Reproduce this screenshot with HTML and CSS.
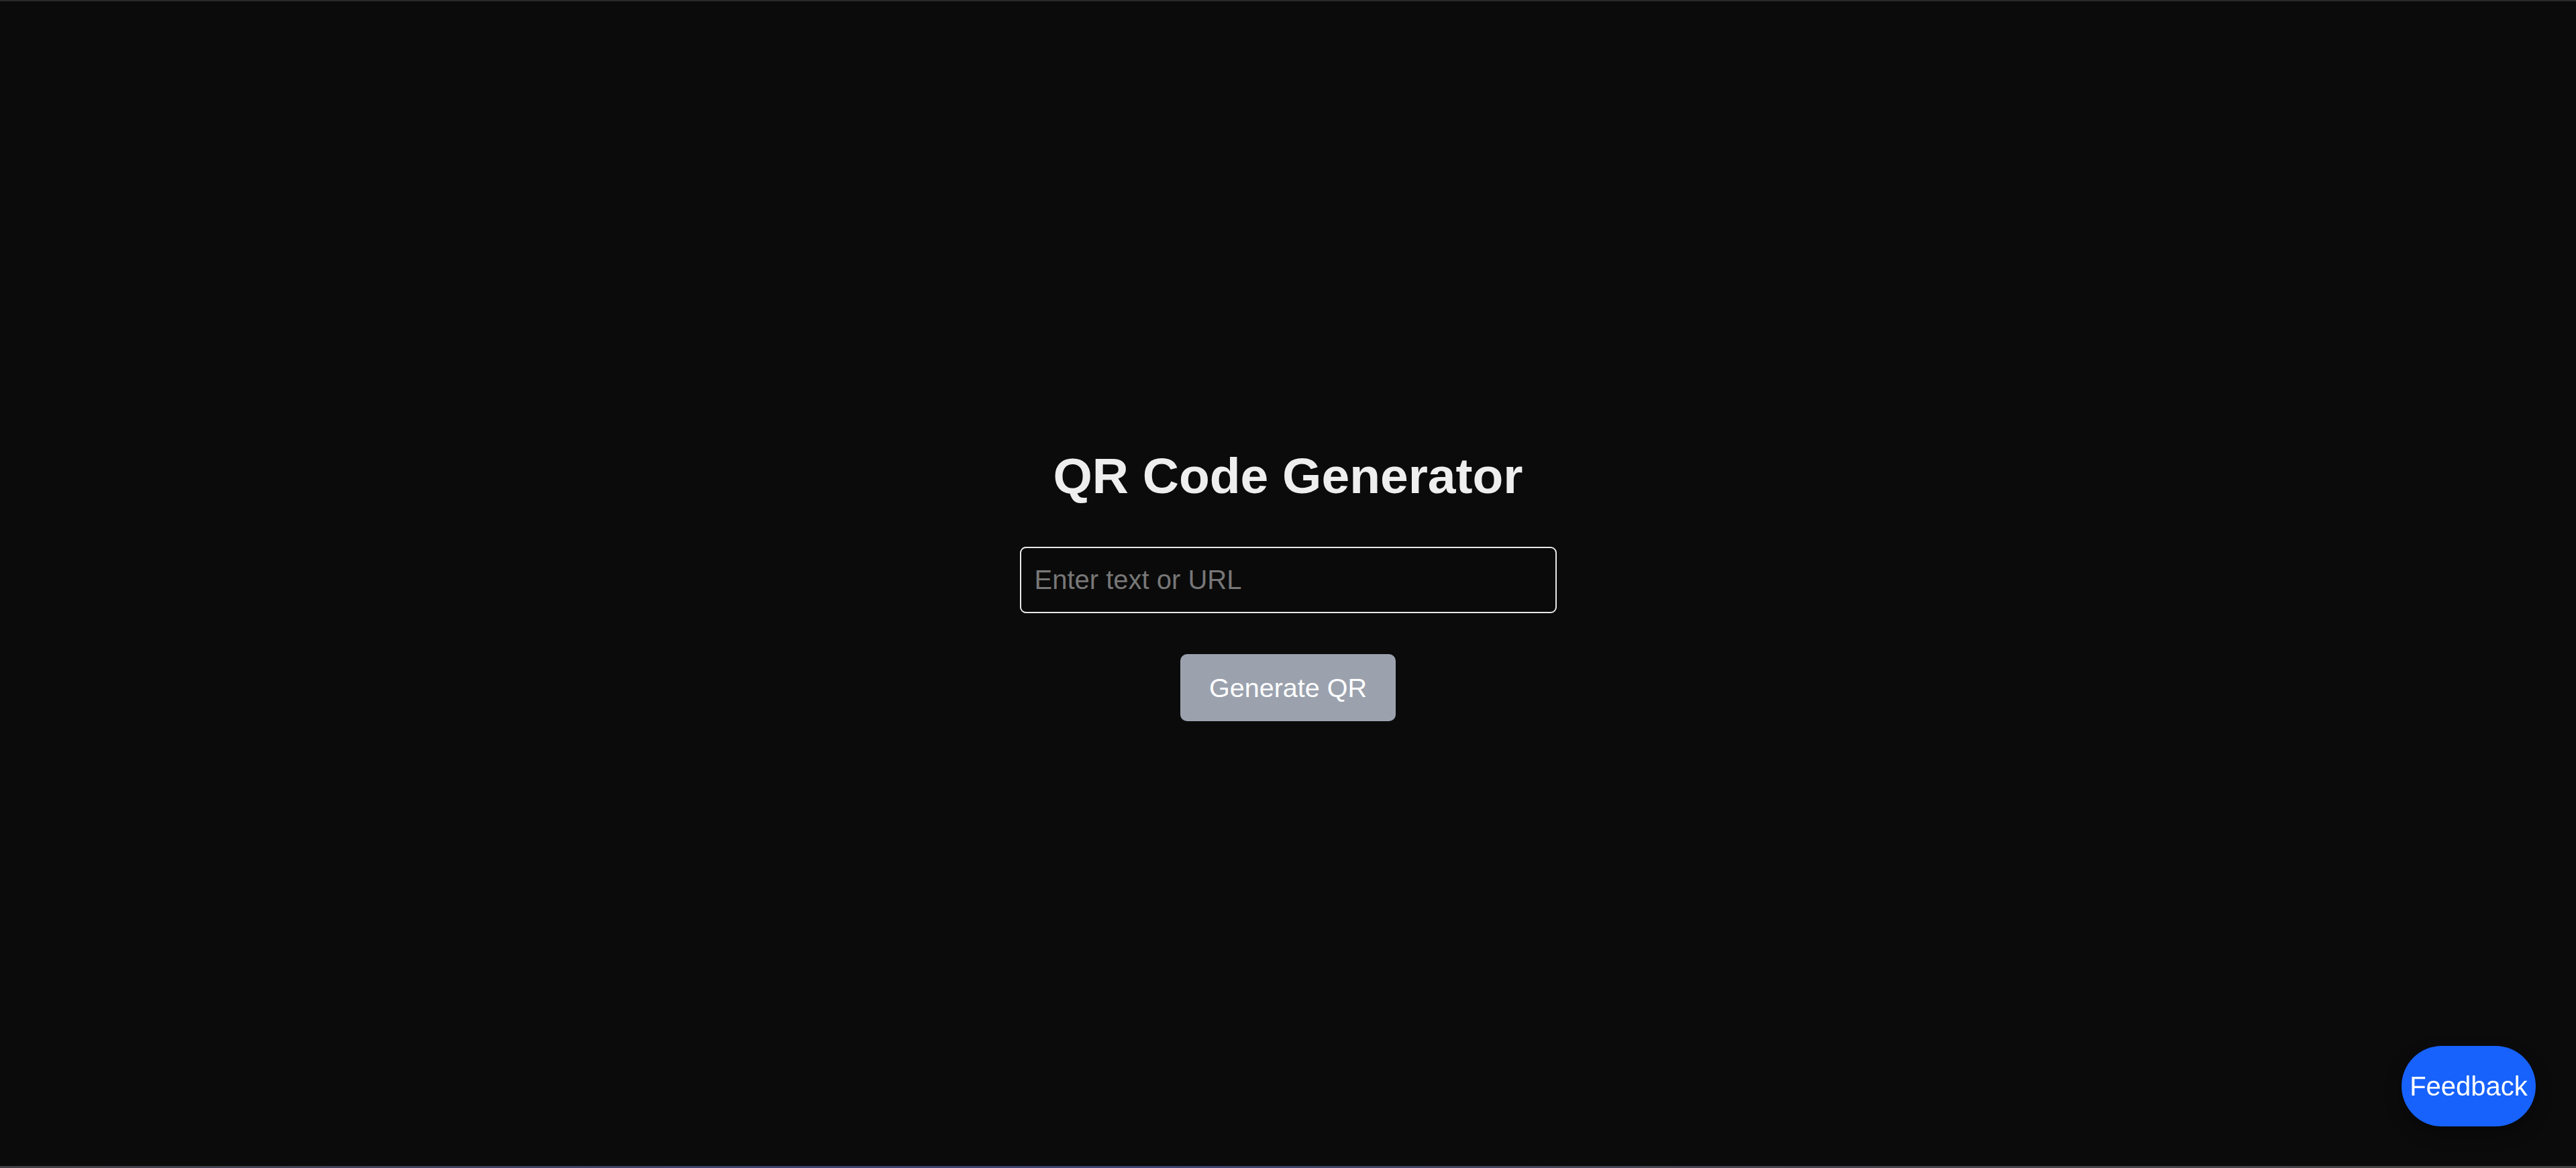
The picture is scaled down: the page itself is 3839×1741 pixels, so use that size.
FILE: index.html
```html
<!DOCTYPE html>
<html lang="en">
<head>
<meta charset="utf-8">
<title>QR Code Generator</title>
<link rel="stylesheet" href="styles.css">
</head>
<body>
<main class="app">
  <h1 class="title">QR Code Generator</h1>
  <input class="field" type="text" placeholder="Enter text or URL">
  <button class="generate" type="button">Generate QR</button>
</main>
<button class="feedback" type="button">Feedback</button>
<div class="edge-bottom"></div>
</body>
</html>
```
FILE: styles.css
```css
html, body {
  margin: 0;
  padding: 0;
  height: 100%;
}
body {
  background: #0b0b0b;
  font-family: "Liberation Sans", Arial, sans-serif;
  border-top: 2px solid #2a2a2a;
  box-sizing: border-box;
  overflow: hidden;
}
.app {
  box-sizing: border-box;
  min-height: 100%;
  padding-bottom: 5px;
  display: flex;
  flex-direction: column;
  align-items: center;
  justify-content: center;
}
.title {
  margin: 0 0 62px;
  padding-top: 2px;
  font-size: 75px;
  line-height: 88px;
  font-weight: bold;
  color: #eeeeee;
}
.field {
  box-sizing: border-box;
  width: 800px;
  height: 99px;
  margin: 0 0 61px;
  padding: 0 20px;
  font-family: "Liberation Sans", Arial, sans-serif;
  font-size: 40px;
  color: #eeeeee;
  background: #0a0a0a;
  border: 2.4px solid #e8e8e8;
  border-radius: 9px;
  outline: none;
}
.field::placeholder {
  color: #777777;
}
.generate {
  box-sizing: border-box;
  height: 100px;
  padding: 0 43px;
  font-family: "Liberation Sans", Arial, sans-serif;
  font-size: 39.5px;
  line-height: 44px;
  color: #ffffff;
  background: #9ba2ae;
  border: none;
  border-radius: 10px;
}
.feedback {
  position: fixed;
  right: 60px;
  bottom: 62px;
  width: 200px;
  height: 120px;
  padding: 0;
  font-family: "Liberation Sans", Arial, sans-serif;
  font-size: 40px;
  color: #ffffff;
  background: #1762fc;
  border: none;
  border-radius: 60px;
  box-shadow: 0 10px 24px rgba(0, 0, 0, 0.35);
}
.edge-bottom {
  position: fixed;
  left: 0;
  right: 0;
  bottom: 0;
  height: 3px;
  background: linear-gradient(to right, #404044 0%, #3e4470 30%, #3d4674 45%, #454552 65%, #414141 100%);
}
```
